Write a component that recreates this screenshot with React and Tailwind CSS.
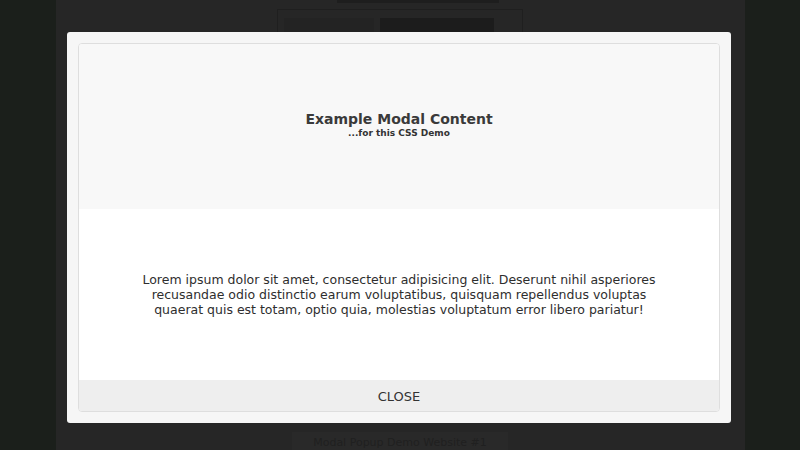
export default function App() {
  return (
    <div className="relative flex h-[450px] w-[800px] justify-center overflow-hidden bg-[#1b1f1b] font-['DejaVu_Sans',sans-serif]">
      {/* page behind the overlay */}
      <div className="flex h-full w-[689px] flex-col items-center bg-[#262626]">
        <div className="ml-[36px] h-[3px] w-[162px] bg-[#1e1e1e]" />
        <div className="mt-[6px] flex h-[26px] w-[246px] gap-[6px] border border-[#1f1f1f] px-[6px] pt-[8px]">
          <div className="h-full w-[90px] bg-[#232323]" />
          <div className="h-full w-[114px] bg-[#1c1c1c]" />
        </div>
        <div className="flex-1" />
        <div className="flex h-[18px] w-[216px] items-end justify-center bg-[#292929] text-[11px] leading-[14px] text-[#202020]">
          Modal Popup Demo Website #1
        </div>
      </div>

      {/* modal */}
      <div className="absolute left-[67px] top-[32px] h-[391px] w-[664px] rounded-[3px] bg-[#f6f6f6] p-[11px]">
        <div className="flex h-full flex-col overflow-hidden rounded-[4px] border border-[#dedede] bg-white text-[#333]">
          <div className="flex h-[165px] flex-col items-center justify-center bg-[#f8f8f8] pb-[4px]">
            <div className="text-[14px] font-bold leading-[17px] text-[#3a3a3a]">Example Modal Content</div>
            <div className="text-[9px] font-bold leading-[11px] text-[#333]">...for this CSS Demo</div>
          </div>
          <div className="flex flex-1 items-center justify-center">
            <p className="text-center text-[12.5px] leading-[15px] text-[#2e2e2e]">
              Lorem ipsum dolor sit amet, consectetur adipisicing elit. Deserunt nihil asperiores
              <br />
              recusandae odio distinctio earum voluptatibus, quisquam repellendus voluptas
              <br />
              quaerat quis est totam, optio quia, molestias voluptatum error libero pariatur!
            </p>
          </div>
          <div className="flex h-[31px] items-center justify-center bg-[#eeeeee] pt-[2px] text-[13px] text-[#333]">
            CLOSE
          </div>
        </div>
      </div>
    </div>
  );
}
